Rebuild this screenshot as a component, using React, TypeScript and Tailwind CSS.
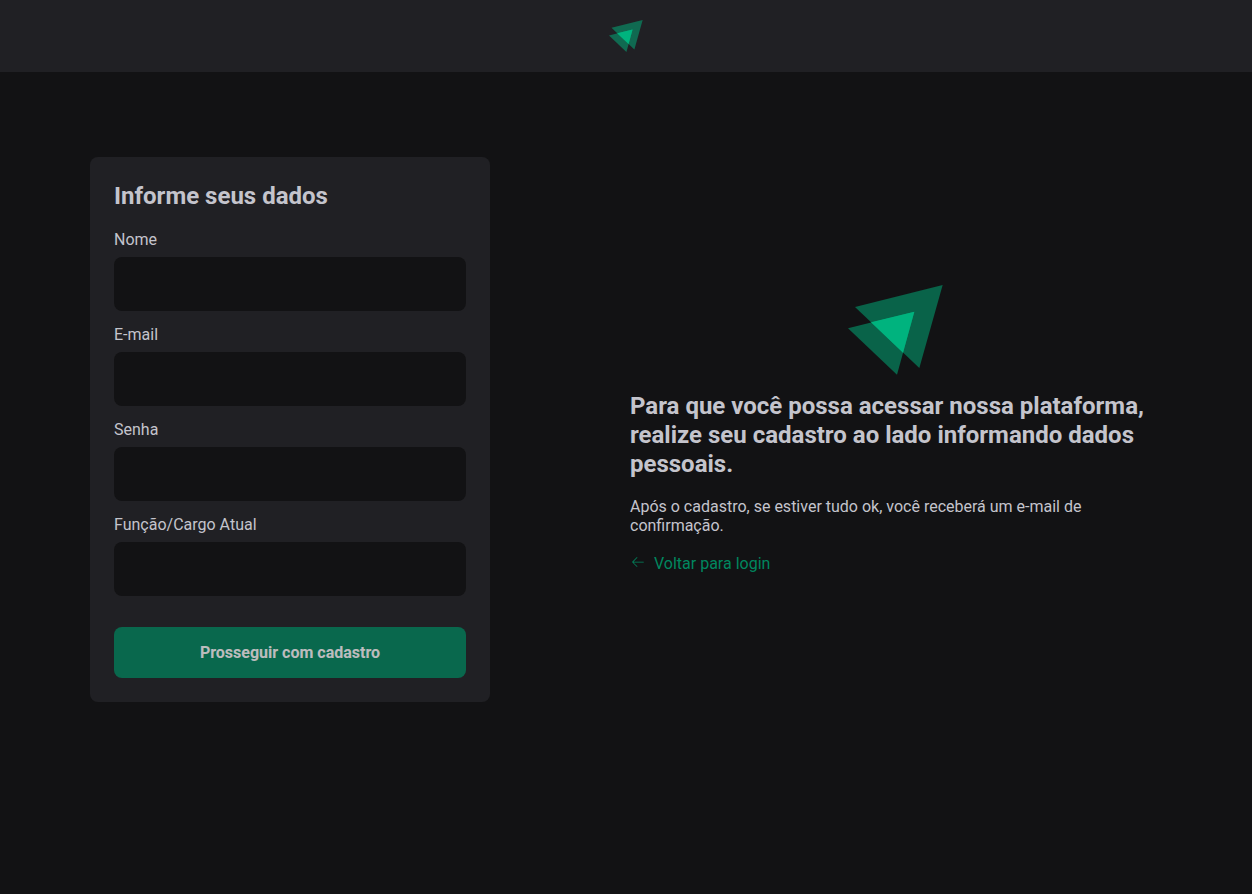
import { PiArrowLeftLight } from 'react-icons/pi';

const fields = [
  { id: 'name', label: 'Nome', type: 'text' },
  { id: 'email', label: 'E-mail', type: 'email' },
  { id: 'password', label: 'Senha', type: 'password' },
  { id: 'role', label: 'Função/Cargo Atual', type: 'text' },
];

function Logo({ className }: { className: string }) {
  return (
    <svg viewBox="0 0 285 270" preserveAspectRatio="xMinYMid meet" className={className} fill="#00b37e" aria-hidden="true">
      <path fillOpacity={0.5} d="M21 66 284 0 214 249Z" />
      <path fillOpacity={0.5} d="M0 130 199 80 147 269Z" />
      <path d="M69 112 199 80 165 203Z" />
    </svg>
  );
}

export default function App() {
  return (
    <div className="min-h-screen bg-[#121214] font-['Roboto',sans-serif] text-base leading-[19px] text-[#c4c4cc]">
      <header className="flex items-center justify-center bg-[#202024] py-5">
        <Logo className="h-8 w-[34px]" />
      </header>

      <main className="mx-auto flex max-w-[1120px] flex-col items-center gap-12 px-6 py-[85px] md:flex-row md:gap-[140px]">
        <form
          className="w-full max-w-[400px] shrink-0 rounded-lg bg-[#202024] p-6"
          onSubmit={(event) => event.preventDefault()}
        >
          <h2 className="mb-[18px] text-2xl leading-[31px] font-bold">Informe seus dados</h2>
          <div className="flex flex-col gap-[14px]">
            {fields.map((field) => (
              <div key={field.id} className="flex flex-col gap-2">
                <label htmlFor={field.id}>{field.label}</label>
                <input
                  id={field.id}
                  name={field.id}
                  type={field.type}
                  className="h-[54px] w-full rounded-lg bg-[#121214] px-4 outline-none focus:ring-1 focus:ring-[#00875f]"
                />
              </div>
            ))}
          </div>
          <button
            type="submit"
            disabled
            className="mt-[31px] w-full rounded-lg bg-[#00875f] py-4 font-bold text-white opacity-70"
          >
            Prosseguir com cadastro
          </button>
        </form>

        <section className="flex min-w-0 flex-1 flex-col">
          <Logo className="h-[90px] w-24 self-center" />
          <h1 className="mt-[17px] text-2xl leading-[29px] font-bold">
            Para que você possa acessar nossa plataforma, realize seu cadastro ao lado informando dados pessoais.
          </h1>
          <p className="mt-[18px]">
            Após o cadastro, se estiver tudo ok, você receberá um e-mail de confirmação.
          </p>
          <a href="#login" className="mt-[19px] flex items-start gap-2 self-start leading-5 text-[#00875f]">
            <PiArrowLeftLight className="size-4" aria-hidden="true" />
            Voltar para login
          </a>
        </section>
      </main>
    </div>
  );
}
